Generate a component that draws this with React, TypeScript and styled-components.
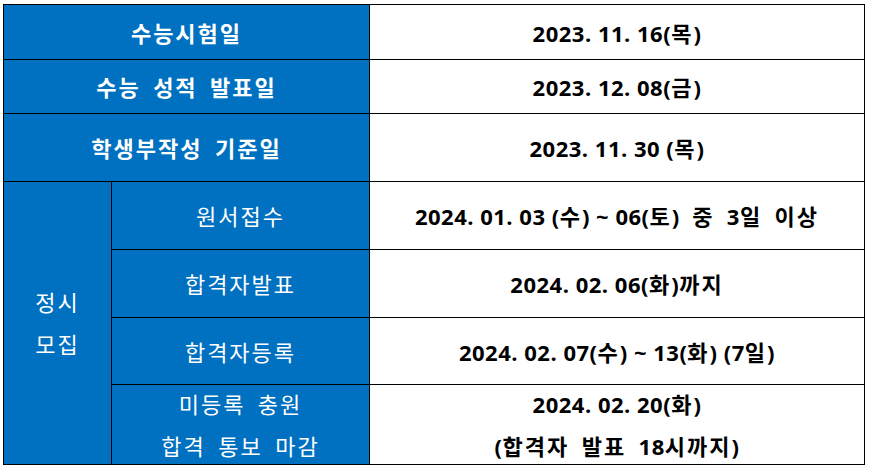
import React from "react";
import styled, { createGlobalStyle } from "styled-components";

const Global = createGlobalStyle`
  html, body { margin: 0; padding: 0; background: #ffffff; }
  body { font-family: "Open Sans", "Noto Sans CJK KR", sans-serif; }
`;

const Page = styled.div`
  padding: 4px 0 0 3px;
`;

const Grid = styled.div`
  display: grid;
  width: max-content;
  grid-template-columns: 107px 257px 494px;
  grid-template-rows: 54px 53px 67px 67px 67px 66px 79px;
  gap: 1px;
  padding: 1px;
  background: #000000;
`;

const Cell = styled.div<{ $head?: boolean; $bold?: boolean; $span?: number; $rows?: number; $tall?: boolean }>`
  display: flex;
  flex-direction: column;
  align-items: center;
  justify-content: center;
  text-align: center;
  background: ${(p) => (p.$head ? "#0070c0" : "#ffffff")};
  color: ${(p) => (p.$head ? "#ffffff" : "#000000")};
  font-family: "Open Sans", "Noto Sans CJK KR", sans-serif;
  font-size: 22px;
  letter-spacing: 0.5px;
  font-weight: ${(p) => (p.$bold ? 700 : 400)};
  line-height: ${(p) => (p.$tall ? "41px" : "28px")};
  white-space: pre;
  grid-column: ${(p) => (p.$span ? `span ${p.$span}` : "auto")};
  grid-row: ${(p) => (p.$rows ? `span ${p.$rows}` : "auto")};
`;

const Line = styled.span`
  display: block;
`;

const Ko = styled.span`
  font-family: "Noto Sans CJK KR", sans-serif;
  font-size: 22px;
  letter-spacing: 2px;
`;

function T({ children }: { children: string }) {
  const parts = children.split(/([\uAC00-\uD7A3]+)/);
  return (
    <Line>
      {parts.map((p, i) =>
        /[\uAC00-\uD7A3]/.test(p) ? <Ko key={i}>{p}</Ko> : <React.Fragment key={i}>{p}</React.Fragment>
      )}
    </Line>
  );
}

export default function App() {
  return (
    <>
      <Global />
      <Page>
        <Grid>
          <Cell $head $bold $span={2}><T>수능시험일</T></Cell>
          <Cell $bold><T>2023. 11. 16(목)</T></Cell>
          <Cell $head $bold $span={2}><T>수능  성적  발표일</T></Cell>
          <Cell $bold><T>2023. 12. 08(금)</T></Cell>
          <Cell $head $bold $span={2}><T>학생부작성  기준일</T></Cell>
          <Cell $bold><T>2023. 11. 30 (목)</T></Cell>
          <Cell $head $rows={4} $tall>
            <T>정시</T>
            <T>모집</T>
          </Cell>
          <Cell $head><T>원서접수</T></Cell>
          <Cell $bold><T>2024. 01. 03 (수) ~ 06(토)  중  3일  이상</T></Cell>
          <Cell $head><T>합격자발표</T></Cell>
          <Cell $bold><T>2024. 02. 06(화)까지</T></Cell>
          <Cell $head><T>합격자등록</T></Cell>
          <Cell $bold><T>2024. 02. 07(수) ~ 13(화) (7일)</T></Cell>
          <Cell $head $tall>
            <T>미등록  충원</T>
            <T>합격  통보  마감</T>
          </Cell>
          <Cell $bold $tall>
            <T>2024. 02. 20(화)</T>
            <T>(합격자  발표  18시까지)</T>
          </Cell>
        </Grid>
      </Page>
    </>
  );
}
